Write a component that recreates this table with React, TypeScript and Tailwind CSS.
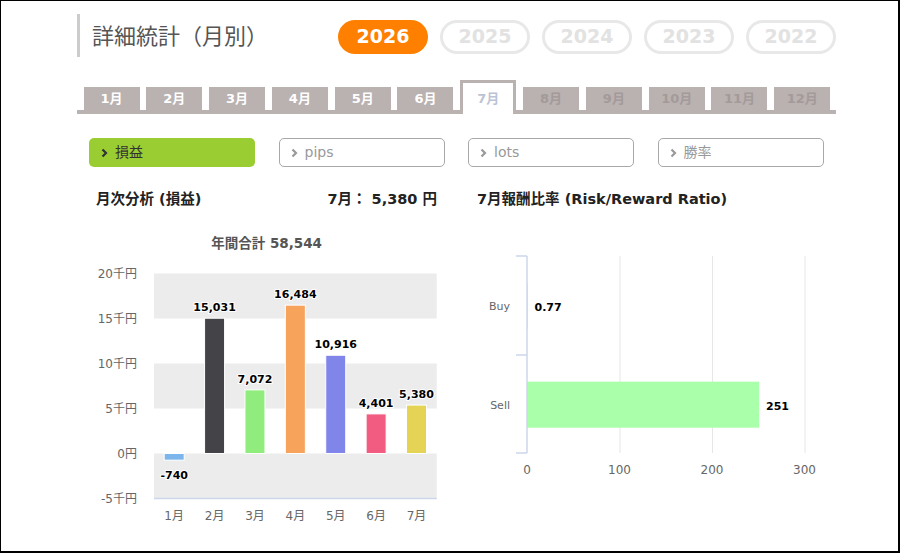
import React from "react";

const years = ["2026", "2025", "2024", "2023", "2022"];
const months = ["1月", "2月", "3月", "4月", "5月", "6月", "7月", "8月", "9月", "10月", "11月", "12月"];
const activeMonth = 6;

const bars = [
    { label: "1月", value: -740, color: "#7cb5ec" },
    { label: "2月", value: 15031, color: "#434348" },
    { label: "3月", value: 7072, color: "#90ed7d" },
    { label: "4月", value: 16484, color: "#f7a35c" },
    { label: "5月", value: 10916, color: "#8085e9" },
    { label: "6月", value: 4401, color: "#f15c80" },
    { label: "7月", value: 5380, color: "#e4d354" },
];

const filters = ["損益", "pips", "lots", "勝率"];

function Chevron({ color }: { color: string }) {
    return (
        <svg width="7" height="10" viewBox="0 0 7 10" className="shrink-0">
            <polyline points="1.5,1.5 5,5 1.5,8.5" fill="none" stroke={color} strokeWidth="2.2" />
        </svg>
    );
}

function MonthlyChart() {
    const left = 74;
    const right = 356.7;
    const zero = 228.5;
    const scale = 0.009;
    const slot = (right - left) / 7;
    const ticks = [
        { y: 48.5, t: "20千円" },
        { y: 93.5, t: "15千円" },
        { y: 138.5, t: "10千円" },
        { y: 183.5, t: "5千円" },
        { y: 228.5, t: "0円" },
        { y: 273.5, t: "-5千円" },
    ];
    const fmt = (n: number) => n.toLocaleString("en-US");

    return (
        <svg width="370" height="310" className="block">
            <text x="186.6" y="23" textAnchor="middle" fontSize="13.5" fontWeight="700" fill="#555">
                年間合計 58,544
            </text>
            <rect x={left} y="48.5" width={right - left} height="45" fill="#ececec" />
            <rect x={left} y="138.5" width={right - left} height="45" fill="#ececec" />
            <rect x={left} y="228.5" width={right - left} height="45" fill="#ececec" />
            <line x1={left} x2={right} y1="273.5" y2="273.5" stroke="#ccd6eb" strokeWidth="1.5" />
            {ticks.map((tk) => (
                <text key={tk.t} x="57" y={tk.y + 4} textAnchor="end" fontSize="12" fill="#666">
                    {tk.t}
                </text>
            ))}
            {bars.map((b, i) => {
                const cx = left + slot * (i + 0.5);
                const h = Math.abs(b.value) * scale;
                const top = b.value >= 0 ? zero - h : zero;
                return (
                    <g key={b.label}>
                        <rect x={cx - 10} y={top} width="20" height={h} fill={b.color} stroke="#fff" strokeWidth="1" />
                        <text
                            x={cx}
                            y={b.value >= 0 ? top - 7 : zero + h + 19}
                            textAnchor="middle"
                            fontSize="11"
                            fontWeight="700"
                            fill="#000"
                            stroke="#fff"
                            strokeWidth="2"
                            paintOrder="stroke"
                        >
                            {fmt(b.value)}
                        </text>
                        <text x={cx} y="295" textAnchor="middle" fontSize="12" fill="#666">
                            {b.label}
                        </text>
                    </g>
                );
            })}
        </svg>
    );
}

function RatioChart() {
    const x0 = 57;
    const k = 0.925;
    const grid = [0, 100, 200, 300];
    return (
        <svg width="360" height="290" className="block">
            {grid.slice(1).map((g) => (
                <line key={g} x1={x0 + g * k + 0.5} x2={x0 + g * k + 0.5} y1="31" y2="228" stroke="#e6e6e6" strokeWidth="1" />
            ))}
            <rect x={x0} y="58" width={0.77 * k} height="46" fill="#aaffaa" />
            <rect x={x0} y="156.7" width={251 * k} height="46" fill="#aaffaa" />
            <line x1={x0} x2={x0} y1="31" y2="228" stroke="#ccd6eb" strokeWidth="1.5" />
            {[31, 130, 228].map((y) => (
                <line key={y} x1="46" x2={x0} y1={y} y2={y} stroke="#ccd6eb" strokeWidth="1.5" />
            ))}
            <text x="40" y="85" textAnchor="end" fontSize="11" fill="#666">Buy</text>
            <text x="40" y="184" textAnchor="end" fontSize="11" fill="#666">Sell</text>
            <text x="64.5" y="85.5" fontSize="11" fontWeight="700" fill="#000" stroke="#fff" strokeWidth="2" paintOrder="stroke">
                0.77
            </text>
            <text x="296" y="184.5" fontSize="11" fontWeight="700" fill="#000" stroke="#fff" strokeWidth="2" paintOrder="stroke">
                251
            </text>
            {grid.map((g) => (
                <text key={g} x={x0 + g * k} y="249" textAnchor="middle" fontSize="12" fill="#666">
                    {g}
                </text>
            ))}
        </svg>
    );
}

export default function App() {
    return (
        <div className="w-[900px] h-[553px] overflow-hidden bg-white border-l border-t border-r-2 border-b-2 border-black font-['DejaVu_Sans','Noto_Sans_CJK_JP',sans-serif]">
            {/* header */}
            <div className="flex items-center ml-[76px] mt-[13px] h-[43px]">
                <div className="w-[261px] h-full flex items-center border-l-[3px] border-[#cccccc] pl-[12px] pb-[3px] text-[22px] text-[#555] font-['Noto_Sans_CJK_JP',sans-serif]">
                    詳細統計（月別）
                </div>
                <div className="flex gap-[12px] mt-[2px]">
                    {years.map((y, i) =>
                        i === 0 ? (
                            <div key={y} className="w-[90px] h-[34px] rounded-full bg-[#ff8000] text-white text-[19px] font-bold flex items-center justify-center">
                                {y}
                            </div>
                        ) : (
                            <div key={y} className="w-[90px] h-[34px] rounded-full border-[3px] border-[#e8e8e8] text-[#e2e2e2] text-[19px] font-bold flex items-center justify-center">
                                {y}
                            </div>
                        )
                    )}
                </div>
            </div>

            {/* month tabs */}
            <div className="ml-[76px] mt-[23px] w-[759px] h-[34px] flex items-end gap-[6.8px] pl-[6.5px] border-b-4 border-[#bab1b1]">
                {months.map((m, i) =>
                    i === activeMonth ? (
                        <div key={m} className="w-[56px] h-[34px] -mb-[4px] bg-white border-[3px] border-b-0 border-[#bab1b1] flex items-center justify-center text-[13px] font-bold text-[#bcc4d4]">
                            {m}
                        </div>
                    ) : (
                        <div
                            key={m}
                            className={
                                i < activeMonth
                                    ? "w-[56px] h-[23px] bg-[#bab1b1] flex items-center justify-center text-[13px] font-bold text-white"
                                    : "w-[56px] h-[23px] bg-[#bab1b1] flex items-center justify-center text-[13px] font-bold text-[#a39a9a]"
                            }
                        >
                            {m}
                        </div>
                    )
                )}
            </div>

            {/* filter buttons */}
            <div className="ml-[88px] mt-[24px] flex gap-[23.5px]">
                {filters.map((f, i) =>
                    i === 0 ? (
                        <div key={f} className="w-[166px] h-[29px] rounded-[5px] bg-[#9acd32] flex items-center gap-[7px] pl-[12px] text-[14px] text-[#333]">
                            <Chevron color="#333" />
                            {f}
                        </div>
                    ) : (
                        <div key={f} className="w-[166px] h-[29px] rounded-[5px] border-[1.5px] border-[#a8a8a8] bg-white flex items-center gap-[7px] pl-[11px] text-[14px] text-[#999]">
                            <Chevron color="#999" />
                            {f}
                        </div>
                    )
                )}
            </div>

            {/* headings */}
            <div className="mt-[23px] flex h-[20px] items-center text-[14.5px] font-bold text-[#222]">
                <div className="ml-[95px] w-[341px] flex justify-between">
                    <span>月次分析 (損益)</span>
                    <span>7月： 5,380 円</span>
                </div>
                <div className="ml-[40px]">7月報酬比率 (Risk/Reward Ratio)</div>
            </div>

            {/* charts */}
            <div className="mt-[15px] ml-[79px] flex gap-[20px]">
                <MonthlyChart />
                <RatioChart />
            </div>
        </div>
    );
}
